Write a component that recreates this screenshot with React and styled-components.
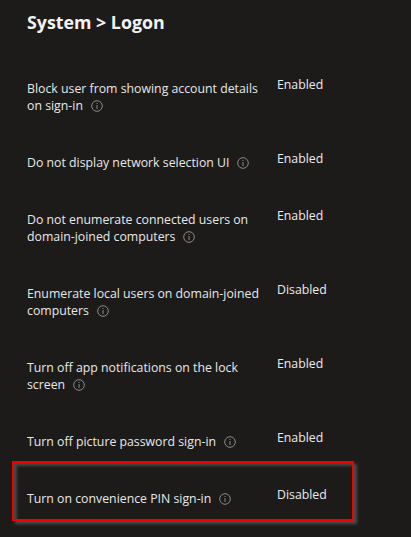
import styled, { createGlobalStyle } from 'styled-components';

const GlobalStyle = createGlobalStyle`
  html, body {
    margin: 0;
    padding: 0;
    background: #1c1b1a;
  }
  body {
    font-family: "Open Sans", "Noto Sans", sans-serif;
    color: #e8e8e8;
  }
`;

const Page = styled.div`
  width: 411px;
  height: 537px;
  overflow: hidden;
  background: #1c1b1a;
  padding: 10px 0 0;
  box-sizing: border-box;
`;
const Title = styled.h1`
  margin: 0 0 0 27px;
  font-size: 17.8px;
  line-height: 24px;
  font-weight: 700;
  color: #f2f2f2;
`;
const List = styled.div`
  margin: 19px 0 0 12px;
  display: flex;
  flex-direction: column;
  gap: 11px;
`;
const Row = styled.div`
  width: 342px;
  box-sizing: border-box;
  display: grid;
  grid-template-columns: 250px auto;
  margin-top: ${props => props.highlighted ? '-2px' : '0'};
  padding: ${props => props.highlighted ? '27px' : '25px'} 0 ${props => props.highlighted ? '12px' : '0'} 13px;
  border: 2px solid ${props => props.highlighted ? '#f00000' : 'transparent'};
  box-shadow: ${props => props.highlighted
    ? '3px 3px 3px rgba(120, 120, 120, 0.55), inset 3px 3px 3px rgba(110, 110, 110, 0.55)'
    : 'none'};
`;
const Label = styled.div`
  width: 238px;
  font-size: 12.3px;
  line-height: 17px;
  color: #e8e8e8;
`;
const InfoIcon = styled.svg`
  width: 12px;
  height: 12px;
  margin-left: 8px;
  vertical-align: -2px;
`;
const Status = styled.div`
  font-size: 12.3px;
  line-height: 17px;
  margin-top: -4px;
  color: #ececec;
`;

const policies = [
  { name: 'Block user from showing account details on sign-in', status: 'Enabled' },
  { name: 'Do not display network selection UI', status: 'Enabled' },
  { name: 'Do not enumerate connected users on domain-joined computers', status: 'Enabled' },
  { name: 'Enumerate local users on domain-joined computers', status: 'Disabled' },
  { name: 'Turn off app notifications on the lock screen', status: 'Enabled' },
  { name: 'Turn off picture password sign-in', status: 'Enabled' },
  { name: 'Turn on convenience PIN sign-in', status: 'Disabled', highlighted: true },
];

const Info = () => (
  <InfoIcon viewBox='0 0 12 12'>
    <circle cx='6' cy='6' r='5.3' fill='none' stroke='#8a8a8a' strokeWidth='1' />
    <rect x='5.5' y='3' width='1' height='1' fill='#8a8a8a' />
    <rect x='5.5' y='5' width='1' height='4' fill='#8a8a8a' />
  </InfoIcon>
);

const App = () => {
  return (
    <Page>
      <GlobalStyle />
      <Title>System &gt; Logon</Title>
      <List>
        {policies.map(item => (
          <Row key={item.name} highlighted={item.highlighted}>
            <Label>
              {item.name}
              <Info />
            </Label>
            <Status>{item.status}</Status>
          </Row>
        ))}
      </List>
    </Page>
  );
};

export default App;
